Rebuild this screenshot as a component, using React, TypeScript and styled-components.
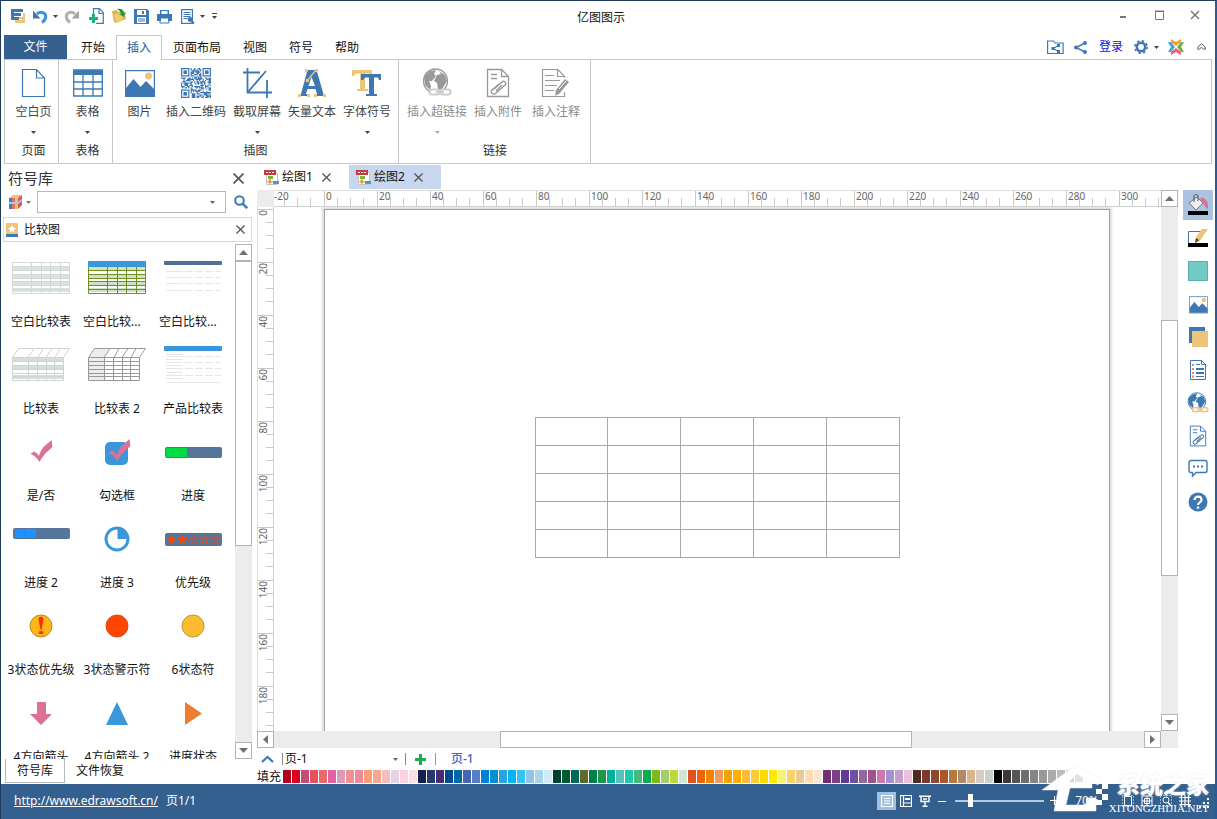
import React from "react";
import styled, { createGlobalStyle, css } from "styled-components";

const blue = "#3d78b4";
const sand = "#ecc47a";
const line = "#c8c8c8";

const Global = createGlobalStyle`
  * { box-sizing: border-box; }
  body { margin: 0; }
  body, button, input, select {
    font-family: "Noto Sans", "Noto Sans CJK SC", sans-serif;
    font-size: 12px;
    line-height: 18px;
    color: #111;
  }
  button { padding: 0; margin: 0; border: 0; background: none; white-space: nowrap; }
  svg { display: block; flex: none; }
`;

/* ---------- window frame ---------- */

const Window = styled.div`
  height: 100vh;
  display: flex;
  flex-direction: column;
  background: #fff;
  border: 1px solid #1f3c5c;
  border-right: 2px solid #2b5a94;
  border-bottom: 0;
  overflow: hidden;
`;

const TitleBar = styled.header`
  height: 34px;
  flex: none;
  display: grid;
  grid-template-columns: 1fr auto 1fr;
  align-items: center;
  padding: 0 14px 0 0;
`;

const QuickBar = styled.div`
  display: flex;
  align-items: center;
  height: 30px;
  padding-left: 7px;
  align-self: start;
`;

const QuickButton = styled.button<{ $w?: number }>`
  width: ${(p) => p.$w || 23}px;
  height: 22px;
  display: flex;
  align-items: center;
  justify-content: center;
`;

const Title = styled.h1`
  margin: 0;
  font-size: 12px;
  font-weight: 400;
`;

const WindowButtons = styled.div`
  display: flex;
  justify-content: flex-end;
  align-self: start;
  align-items: center;
  height: 28px;
  gap: 24px;
`;

const MenuBar = styled.nav`
  display: flex;
  height: 24px;
  flex: none;
  padding: 0 2px 0 3px;
`;

const FileButton = styled.button`
  width: 63px;
  margin-right: 3px;
  color: #fff;
  background: #34608f;
`;

const MenuTab = styled.button<{ $active?: boolean }>`
  padding: 0 10px;
  border: 1px solid transparent;
  border-bottom: 0;
  ${(p) =>
    p.$active &&
    css`
      position: relative;
      margin-bottom: -1px;
      background: #fff;
      border-color: ${line};
      color: #2b5a94;
    `}
`;

const MenuRight = styled.div`
  margin-left: auto;
  display: flex;
  align-items: center;
`;

const Login = styled.a`
  color: #1010e8;
  text-decoration: none;
  margin: 0 9px 0 6px;
`;

/* ---------- ribbon ---------- */

const Ribbon = styled.div`
  display: flex;
  flex: none;
  height: 105px;
  margin: 0 3px;
  border: 1px solid ${line};
`;

const Group = styled.section<{ $pad: string }>`
  display: flex;
  flex-direction: column;
  justify-content: space-between;
  border-right: 1px solid ${line};
  padding: ${(p) => p.$pad};
`;

const GroupItems = styled.div`
  display: flex;
  gap: 1px;
`;

const GroupName = styled.div`
  text-align: center;
  color: #333;
`;

const Tool = styled.button<{ $w?: number }>`
  min-width: ${(p) => p.$w || 45}px;
  padding: 0 3px;
  height: 72px;
  display: flex;
  flex-direction: column;
  align-items: center;
  color: #444;
  &:disabled { color: #8c8c8c; }
  span { margin: 5px 0 10px; }
`;

/* ---------- main area ---------- */

const Main = styled.main`
  flex: 1;
  min-height: 0;
  display: flex;
  padding-top: 1px;
`;

const Panel = styled.aside`
  width: 251px;
  flex: none;
  display: flex;
  flex-direction: column;
  padding-left: 2px;
`;

const PanelHead = styled.div`
  height: 26px;
  display: flex;
  align-items: center;
  justify-content: space-between;
  padding: 0 8px 0 5px;
  h2 { margin: 0; font-size: 15px; font-weight: 400; color: #333; }
`;

const SearchRow = styled.div`
  height: 22px;
  display: flex;
  align-items: center;
  padding-left: 5px;
  gap: 3px;
`;

const SearchBox = styled.div`
  flex: 1;
  min-width: 0;
  margin-left: 3px;
  height: 22px;
  display: flex;
  align-items: center;
  border: 1px solid #b8b8b8;
  input { flex: 1; min-width: 0; height: 18px; border: 0; outline: 0; background: transparent; }
  button { width: 15px; }
`;

const SectionHead = styled.div`
  height: 25px;
  margin-top: 4px;
  display: flex;
  align-items: center;
  border: 1px solid #d8d8d8;
  padding: 0 6px 0 2px;
  gap: 6px;
  span { flex: 1; }
`;

const PanelBody = styled.div`
  flex: 1;
  min-height: 0;
  margin-top: 2px;
  display: flex;
  justify-content: space-between;
`;

const Symbols = styled.div`
  width: 228px;
  display: grid;
  grid-template-columns: repeat(3, 76px);
  grid-auto-rows: 87px;
  overflow: hidden;
`;

const Symbol = styled.button`
  display: flex;
  flex-direction: column;
  align-items: center;
  justify-content: flex-end;
  line-height: 19px;
  > div { height: 68px; display: flex; align-items: center; }
`;

const SymbolName = styled.span<{ $cut: boolean }>`
  ${(p) =>
    p.$cut &&
    css`
      align-self: flex-start;
      padding-left: 4px;
    `}
`;

const PanelTabs = styled.div`
  height: 25px;
  display: flex;
  padding-left: 2px;
`;

const PanelTab = styled.button<{ $active?: boolean }>`
  height: 24px;
  padding: 0 11px;
  border: ${(p) => (p.$active ? "1px solid #b8b8b8" : "0")};
  border-top: 0;
`;

const ScrollBar = styled.div<{ $row?: boolean }>`
  display: flex;
  flex-direction: ${(p) => (p.$row ? "row" : "column")};
  ${(p) => (p.$row ? "height" : "width")}: 17px;
  background: #ececec;
`;

const PageScroll = styled(ScrollBar)`
  grid-area: ${(p) => (p.$row ? "3 / 1 / 4 / 3" : "1 / 3 / 3 / 4")};
`;

const ScrollButton = styled.button`
  width: 17px;
  height: 17px;
  flex: none;
  display: flex;
  align-items: center;
  justify-content: center;
  border: 1px solid #b4b4b4;
  background: #fff;
`;

const Space = styled.div<{ $grow: number }>`
  flex: ${(p) => p.$grow} 1 0;
`;

const Thumb = styled(Space)`
  border: 1px solid #b4b4b4;
  background: #fff;
`;

const Center = styled.div`
  flex: 1;
  min-width: 0;
  margin-left: 5px;
  display: flex;
  flex-direction: column;
`;

const DocTabs = styled.div`
  height: 25px;
  display: flex;
`;

const DocTab = styled.div<{ $active?: boolean }>`
  width: 92px;
  height: 24px;
  display: flex;
  align-items: center;
  gap: 3px;
  padding-left: 7px;
  background: ${(p) => (p.$active ? "#c7d7f0" : "#fff")};
  button:last-child { margin-left: 6px; }
`;

const Workspace = styled.div`
  flex: 1;
  min-height: 0;
  display: grid;
  grid-template-columns: 17px minmax(0, 1fr) 17px;
  grid-template-rows: 17px minmax(0, 1fr) 17px;
`;

const Corner = styled.div`
  background: #ececec;
`;

const RulerTop = styled.div`
  display: flex;
  overflow: hidden;
  border-top: 1px solid #ddd;
  border-bottom: 1px solid #d0d0d0;
`;

const MarkTop = styled.div`
  width: 53px;
  flex: none;
  padding-left: 1px;
  border-left: 1px solid ${line};
  font-size: 10px;
  line-height: 10px;
  color: #666;
  background: repeating-linear-gradient(90deg, transparent 0 12px, ${line} 12px 13px) left bottom / 40px 8px no-repeat;
  &:first-child { margin-left: -3px; padding-left: 2px; }
`;

const RulerSide = styled.div`
  display: flex;
  flex-direction: column;
  overflow: hidden;
  padding-top: 2px;
  border-left: 1px solid #ddd;
  border-right: 1px solid #d0d0d0;
`;

const MarkSide = styled.div`
  height: 53px;
  flex: none;
  border-top: 1px solid ${line};
  background: repeating-linear-gradient(180deg, transparent 0 12px, ${line} 12px 13px) right top / 7px 40px no-repeat;
  span {
    display: block;
    writing-mode: vertical-rl;
    transform: rotate(180deg);
    width: 10px;
    font-size: 10px;
    line-height: 10px;
    color: #666;
  }
`;

const Canvas = styled.div`
  display: flex;
  overflow: hidden;
  background: #fff;
  padding: 2px 51px 0 50px;
`;

const Page = styled.div`
  flex: 1;
  border: 1px solid #a0a0a0;
  border-bottom: 0;
  box-shadow: 0 0 2px 2px #dedede;
  padding-top: 207px;
`;

const Grid = styled.table`
  width: 365px;
  height: 141px;
  margin: 0 auto;
  table-layout: fixed;
  border-collapse: collapse;
  td { border: 1px solid #a8a8a8; padding: 0; }
`;

const PageTabs = styled.div`
  height: 22px;
  display: flex;
  align-items: center;
  padding-left: 4px;
`;

const PagePicker = styled.div`
  width: 124px;
  height: 12px;
  margin: 0 8px;
  display: flex;
  align-items: center;
  border: solid #888;
  border-width: 0 1px;
  padding-right: 7px;
  select { flex: 1; appearance: none; border: 0; padding: 0 0 0 2px; background: none; outline: 0; }
`;

const PageTab = styled.button`
  margin-left: 8px;
  height: 12px;
  line-height: 12px;
  padding-left: 15px;
  border-left: 1px solid #999;
  color: #3b62c4;
  font-weight: 500;
`;

const Palette = styled.div`
  height: 14px;
  display: flex;
  gap: 1px;
  overflow: hidden;
  span { width: 25px; line-height: 14px; }
`;

const Swatch = styled.button<{ $c: string }>`
  width: 8px;
  height: 13px;
  flex: none;
  background: ${(p) => p.$c};
`;

const SideBar = styled.div`
  width: 37px;
  flex: none;
  display: flex;
  flex-direction: column;
  align-items: center;
  gap: 3px;
  padding: 25px 2px 0 5px;
`;

const SideButton = styled.button<{ $active?: boolean }>`
  width: 30px;
  height: 30px;
  display: flex;
  align-items: center;
  justify-content: center;
  background: ${(p) => (p.$active ? "#a9c3e0" : "transparent")};
`;

/* ---------- status bar ---------- */

const StatusBar = styled.footer`
  height: 35px;
  flex: none;
  display: flex;
  align-items: center;
  padding: 0 1px 2px 13px;
  background: #34608f;
  color: #fff;
  a { color: #fff; margin-right: 8px; }
`;

const StatusTools = styled.div`
  margin-left: auto;
  display: flex;
  align-items: center;
`;

const StatusButton = styled.button<{ $active?: boolean; $w?: number }>`
  width: ${(p) => p.$w || 19}px;
  height: 18px;
  display: flex;
  align-items: center;
  justify-content: center;
  color: #fff;
  background: ${(p) => (p.$active ? "#a5bfe0" : "transparent")};
`;

const ZoomValue = styled(StatusButton)`
  padding-right: 8px;
`;

const Zoom = styled.input`
  appearance: none;
  width: 89px;
  height: 14px;
  margin: 0 0 0 5px;
  background: transparent;
  &::-webkit-slider-runnable-track { height: 2px; background: #b4c8e0; }
  &::-webkit-slider-thumb { appearance: none; width: 5px; height: 13px; margin-top: -6px; background: #fff; }
`;

const Watermark = styled.div`
  position: absolute;
  right: 8px;
  bottom: 4px;
  width: 167px;
  height: 52px;
  display: flex;
  justify-content: space-between;
  align-items: flex-end;
  color: #fff;
  pointer-events: none;
`;

const WatermarkText = styled.div`
  flex: none;
  display: flex;
  flex-direction: column;
  align-items: flex-end;
  strong {
    font-family: "Noto Sans CJK SC", sans-serif;
    font-size: 23px;
    line-height: 27px;
    margin-bottom: 4px;
    font-weight: 900;
    text-shadow: 0 0 2px #dde3ea;
  }
  small { font-family: "Liberation Serif", serif; font-size: 11px; line-height: 14px; }
`;

/* ---------- icons ---------- */

type Art = { w: number; h?: number; vb?: string; children: React.ReactNode };
const Svg = ({ w, h = w, vb, children }: Art) => (
  <svg width={w} height={h} viewBox={vb || `0 0 ${w} ${h}`} fill="none" aria-hidden="true">
    {children}
  </svg>
);

const Caret = ({ c = "#444" }: { c?: string }) => (
  <Svg w={5} h={3}><path d="M0 0h5L2.500 3z" fill={c} /></Svg>
);
const Cross = ({ s = 9, c = "#555" }: { s?: number; c?: string }) => (
  <Svg w={s} vb="0 0 10 10"><path d="M.5.5l9 9M9.500.5l-9 9" stroke={c} strokeWidth="1.500" /></Svg>
);
const arrows: Record<string, string> = {
  up: "M4.500 2L9 7H0z",
  down: "M0 2h9L4.500 7z",
  left: "M7 0v9L2 4.500z",
  right: "M2 0v9l5-4.500z",
};
const Arrow = ({ d }: { d: string }) => (
  <Svg w={9}><path d={arrows[d]} fill="#707070" /></Svg>
);

const EdrawIcon = () => (
  <Svg w={16}>
    <path d="M7 9h6V5h2v10H5v-3h7v-1H7z" fill={sand} />
    <path d="M1 1h12v3H4v1h7v3H4v1h5v3H1z" fill={blue} />
  </Svg>
);
const UndoIcon = () => (
  <Svg w={16}>
    <path d="M5 6c4-3.500 9-1 8.700 3-.2 2-1.700 4-3.700 5.500" stroke="#3a94d6" strokeWidth="3" />
    <path d="M1 2.500v8h7.500z" fill={blue} />
  </Svg>
);
const RedoIcon = () => (
  <Svg w={16}>
    <path d="M11 6c-4-3.500-9-1-8.700 3 .2 2 1.700 4 3.700 5.500" stroke="#b0b0b0" strokeWidth="3" />
    <path d="M15 2.500v8H7.500z" fill="#a4a4a4" />
  </Svg>
);
const NewIcon = () => (
  <Svg w={16}>
    <path d="M5.500 7V.7h6l3.800 4v10.600H8M11 1v4.500h4" stroke={blue} strokeWidth="1.200" />
    <path d="M4 6h3v3h3v3H7v3H4v-3H1V9h3z" fill="#1fae85" />
  </Svg>
);
const OpenIcon = () => (
  <Svg w={16}>
    <path d="M1 3l5-1 1 2 6-1 2 8-10 4-2-1z" fill="#e0b04a" />
    <path d="M3 6l11-2-3 9-6 2z" fill="#f2cc6c" />
    <path d="M6 1c4-1 6 0 7 4l2-1-2 5-5-3 2-.5C9 3 8 2 6 1z" fill="#23963f" />
  </Svg>
);
const SaveIcon = () => (
  <Svg w={15}>
    <path d="M0 0h13l2 2v13H0z" fill={blue} />
    <path d="M3 1h9v5H3zM3 8h9v6H3z" fill="#fff" />
    <path d="M8 2h2v3H8zM4 9.500h7v1H4zM4 11.500h7v1H4z" fill={blue} />
  </Svg>
);
const PrintIcon = () => (
  <Svg w={15}>
    <path d="M0 5h15v7H0zM3 1h9v4H3z" fill={blue} />
    <path d="M4.500 2h6v3h-6zM4 9h7v5H4z" fill="#fff" />
    <path d="M3 9h9v5H3z" stroke={blue} />
  </Svg>
);
const PreviewIcon = () => (
  <Svg w={14} h={15}>
    <path d="M.6.600h10.800v13.800H.6z" stroke={blue} strokeWidth="1.200" />
    <path d="M2.500 3.500h7M2.500 5.500h7M2.500 7.500h7M2.500 9.500h4" stroke={blue} />
    <circle cx="9" cy="10.500" r="2.400" fill={blue} />
    <path d="M10.500 12l2.500 2.500" stroke={blue} strokeWidth="2" />
  </Svg>
);

const BlankIcon = ({ c = blue }: { c?: string }) => (
  <Svg w={30}>
    <path d="M3.500 1.500h14l8 8.500v18.500h-22zM17.500 1.500v8.500h8" stroke={c} strokeWidth="1.200" />
  </Svg>
);
const TableIcon = () => (
  <Svg w={30}>
    <path d="M.7 2h28.600v26H.7zM.7 14h28.600M.7 21h28.600M10 6v22M20 6v22" stroke={blue} strokeWidth="1.300" />
    <path d="M0 2h30v5H0z" fill={blue} />
  </Svg>
);
const PictureIcon = ({ w = 30 }: { w?: number }) => (
  <Svg w={w} vb="0 0 30 30">
    <path d="M.6 2.600h28.800v25.800H.6z" stroke={blue} strokeWidth="1.200" />
    <path d="M1 20l7.500-9 7 8 5.500-6 8 8v7H1z" fill={blue} />
    <circle cx="23.500" cy="8" r="3.500" fill={sand} />
  </Svg>
);
const QrIcon = () => {
  const n = 25;
  const cells: string[] = [];
  const corner = (x: number, y: number) => (x < 8 && y < 8) || (x > n - 9 && y < 8) || (x < 8 && y > n - 9);
  let seed = 11;
  for (let y = 0; y < n; y++)
    for (let x = 0; x < n; x++) {
      seed = (seed * 16807) % 2147483647;
      if (!corner(x, y) && seed / 2147483647 > 0.45) cells.push(`M${x} ${y}h1v1h-1z`);
    }
  const finder = (x: number, y: number) => (
    <g key={`${x}-${y}`}>
      <path d={`M${x + 0.5} ${y + 0.5}h6v6h-6z`} stroke={blue} />
      <path d={`M${x + 2} ${y + 2}h3v3h-3z`} fill={blue} />
    </g>
  );
  return (
    <Svg w={30} vb="0 0 25 25">
      <path d={cells.join("")} fill={blue} />
      {finder(0, 0)}{finder(18, 0)}{finder(0, 18)}
    </Svg>
  );
};
const CropIcon = () => (
  <Svg w={30}>
    <path d="M5.500 0v24.500H30M1 4.500h17M25 12v18M6 24L24 3" stroke={blue} strokeWidth="1.800" />
  </Svg>
);
const VectorIcon = () => (
  <Svg w={30}>
    <path d="M10.500 2h9l7 24h2v2H17v-2h3l-1.500-5h-8L9 26h2v2H2v-2h2zM14.500 9l-3 9H18z" fill={blue} />
    <path d="M9 14L19 2" stroke={sand} strokeWidth="1.400" />
    <path d="M8 1h3v3H8zM18 1h3v3h-3zM9 11h3v3H9zM1 26h3v3H1zM10 26h3v3h-3zM17 26h3v3h-3zM26 26h3v3h-3z" fill={sand} />
  </Svg>
);
const FontIcon = () => (
  <Svg w={30}>
    <path d="M0 2h20v6h-2l-1-2.500h-4V21h3v2H5v-2h3V5.500H4L2 8H0z" fill={sand} />
    <path d="M9 6h20v6h-2l-1-2.500h-4V26h3v2H14v-2h3V9.500h-4L11 12H9z" fill={blue} />
  </Svg>
);
const GlobeIcon = ({ w = 30, c = blue, l = sand }: { w?: number; c?: string; l?: string }) => (
  <Svg w={w} vb="0 0 30 30">
    <circle cx="13.500" cy="13" r="12" stroke={c} strokeWidth="1.300" />
    <path d="M3 7l5-4 6-1-2 4 2 2-4 5H7l2 5-1 4-5-5-1-7zM17 3l6 4 2 6-3 5-3 5-3-2-1-6-3-2 3-6 4-1z" fill={c} />
    <rect x="7.500" y="21.500" width="10" height="5" rx="2" fill="#fff" stroke={l} strokeWidth="2" />
    <rect x="18.500" y="21.500" width="10" height="5" rx="2" fill="#fff" stroke={l} strokeWidth="2" />
    <path d="M14 24h8" stroke={l} strokeWidth="2" />
  </Svg>
);
const ClipIcon = ({ w = 30, c = blue }: { w?: number; c?: string }) => (
  <Svg w={w} vb="0 0 30 30">
    <path d="M4.500 1.500h14l7 7v20h-21zM18.500 1.500v7h7M8 6.500h6M8 10.500h6" stroke={c} strokeWidth="1.300" />
    <path d="M11 21l8-7c2-2 5 1 3 3l-9 8c-3 3-6-1-4-3l7-6M13 23l6-6" stroke={c} strokeWidth="1.400" />
  </Svg>
);
const NoteIcon = () => (
  <Svg w={30}>
    <path d="M23.500 10V8.500L17 1.500H1.500v27h22V24M16.500 2v6.500h7M4 7.500h9M4 12.500h15M4 17.500h12M4 22.500h9" stroke="#999" strokeWidth="1.200" />
    <path d="M24 11l4 3-9 11-5 3 1-6z" fill="#999" />
    <path d="M18 21l7-8" stroke="#fff" />
  </Svg>
);

const DocIcon = () => (
  <Svg w={15}>
    <path d="M2.500 1.500h9l2 2v11h-11z" fill="#fff" stroke="#c4c4c4" />
    <path d="M0 0h12v5H0z" fill="#c43a3f" />
    <path d="M2 2h2v1H2zM5 2h2v1H5zM8 2h2v1H8z" fill="#fff" />
    <path d="M4 6h5v3H4z" fill="#7cb342" />
    <path d="M6 9v3h4" stroke="#d59a3b" />
    <path d="M3 12l3-3 2 3-2 2z" fill="#e9a53b" />
    <path d="M9 11h6v3H9z" fill="#4a9ad8" />
  </Svg>
);
const BooksIcon = () => (
  <Svg w={15} h={16}>
    <path d="M1 4l4-3h9l-4 3z" fill="#f0b8a0" />
    <path d="M1 4h3v11H1z" fill="#3f82c4" />
    <path d="M4 4h3v11H4z" fill="#e8715c" />
    <path d="M7 4h3v11H7z" fill="#efc252" />
    <path d="M10 4l4-3v10l-4 4z" fill="#d95763" />
    <path d="M1 8h9l4-3v2l-4 3H1z" fill="#9ad0ee" />
  </Svg>
);
const SectionIcon = () => (
  <Svg w={12} h={14}>
    <path d="M0 0h12v11H0z" fill={sand} />
    <path d="M0 11h12v3H0z" fill={blue} />
    <path d="M6 2l1.200 2.600 2.800.3-2 2 .6 2.700L6 8.300 3.400 9.600 4 6.900l-2-2 2.800-.3z" fill="#fff" />
  </Svg>
);
const SearchIcon = () => (
  <Svg w={14}>
    <circle cx="5.500" cy="5.500" r="4.300" stroke={blue} strokeWidth="2" />
    <path d="M8.800 8.800l4.400 4.400" stroke={blue} strokeWidth="2.400" />
  </Svg>
);

/* ---------- symbol thumbnails ---------- */

const FlatTable = ({ stroke, stripe, head }: { stroke: string; stripe: string; head?: string }) => (
  <Svg w={58} h={34}>
    {[6, 13, 20, 27].map((y) => <path key={y} d={`M1 ${y}h56v4H1z`} fill={stripe} />)}
    <path
      d="M.5 1.500h57v31H.5zM.5 5.500h57M.5 9.500h57M.5 13.500h57M.5 17.500h57M.5 20.500h57M.5 24.500h57M.5 28.500h57M19.500 1v31M29.500 1v31M38.500 1v31M48.500 1v31"
      stroke={stroke}
    />
    {head && <path d="M0 0h58v6H0z" fill={head} />}
  </Svg>
);
const SoftTable = ({ head, side }: { head: string; side?: boolean }) => (
  <Svg w={58} h={side ? 38 : 34}>
    <rect width="58" height={side ? 5 : 4} rx="1" fill={head} />
    <path d="M2 10.500h55M2 16.500h55M2 22.500h55M2 29.500h55" stroke="#e6e6e6" strokeDasharray="17 2 8 2 8 2 8 2 8 2" />
    {side && <path d="M2 8.500h16M2 13.500h16M2 19.500h16M2 26.500h16M2 32.500h16M2 36.500h55" stroke="#e6e6e6" />}
  </Svg>
);
const SlantTable = ({ stroke, stripe, first }: { stroke: string; stripe?: string; first?: string }) => (
  <Svg w={58} h={34}>
    {first && <path d="M1 10L7 1h14l-5 9v22H1z" fill={first} />}
    {stripe && [10, 17, 27].map((y) => <path key={y} d={`M1 ${y}h51v4H1z`} fill={stripe} />)}
    <path
      d="M.5 9.500L6.500.5h51l-6 9v23H.5zM16 9.500l6-9M26 9.500l5-9M34 9.500l6-9M43 9.500l5-9M.5 9.500h51M.5 13.500h51M.5 17.500h51M.5 21.500h51M.5 25.500h51M.5 28.500h51M16.500 10v22M25.500 10v22M34.500 10v22M42.500 10v22"
      stroke={stroke}
    />
  </Svg>
);
const tick = "M8.500 19.500l4-2 3.500 3 .8 1.500c1.500-4 3-7 5.200-9.500L29.700 6l.6 7.300L26 17c-4 3-6 7-8.500 11-2-3.500-5-6.500-9-8.500z";
const star = "M4.500 0l1.200 3.200H9L6.300 5.200l1 3.300-2.800-2-2.800 2 1-3.300L0 3.200h3.300z";

const symbols: [string, React.ReactNode][] = [
  ["空白比较表", <FlatTable stroke="#d3dad6" stripe="#d9e2dd" />],
  ["空白比较...", <FlatTable stroke="#6f8f20" stripe="#cfe3c0" head="#3a98da" />],
  ["空白比较...", <SoftTable head="#4f6f94" />],
  ["比较表", <SlantTable stroke="#cdd5d0" stripe="#d3e0d8" />],
  ["比较表 2", <SlantTable stroke="#999" first="#ececec" />],
  ["产品比较表", <SoftTable head="#3a98da" side />],
  ["是/否", <Svg w={38} h={36}><path d={tick} fill="#dc7096" /></Svg>],
  ["勾选框", (
    <Svg w={38} h={36}>
      <rect x="7" y="8" width="23" height="23" rx="5" fill="#3a98da" />
      <path d={tick} fill="#dc7096" transform="translate(2 -1)" />
    </Svg>
  )],
  ["进度", <Svg w={57} h={11}><rect width="57" height="11" rx="2" fill="#56759a" /><path d="M1 1h21v9H1z" fill="#00dc46" /></Svg>],
  ["进度 2", (
    <Svg w={57} h={23}>
      <rect width="57" height="11" rx="2" fill="#56759a" />
      <path d="M2 1h10v9H2zM13 1h10v9H13z" fill="#1e90ff" />
    </Svg>
  )],
  ["进度 3", (
    <Svg w={26}>
      <circle cx="13" cy="13" r="11" stroke="#3a98da" strokeWidth="3" />
      <path d="M13.500 13V2a11 11 0 0 1 10 11z" fill="#3a98da" />
    </Svg>
  )],
  ["优先级", (
    <Svg w={57} h={13}>
      <rect width="57" height="13" rx="2" fill="#56759a" />
      {[0, 1, 2, 3, 4].map((i) => (
        <path key={i} d={star} transform={`translate(${2 + i * 11} 2)`} fill={i < 2 ? "#ff4500" : "none"} stroke="#ff4500" strokeWidth=".8" />
      ))}
    </Svg>
  )],
  ["3状态优先级", (
    <Svg w={24}>
      <circle cx="12" cy="12" r="11" fill="#ffb515" stroke="#b98a20" />
      <path d="M9.500 5c0-3 5-3 5 0L12.500 16h-1z" fill="#ff2a00" />
      <ellipse cx="12" cy="18.500" rx="2.500" ry="1.500" fill="#ff2a00" />
    </Svg>
  )],
  ["3状态警示符", <Svg w={24}><circle cx="12" cy="12" r="11" fill="#ff4500" stroke="#e04a10" /></Svg>],
  ["6状态符", <Svg w={24}><circle cx="12" cy="12" r="11" fill="#fdbb30" stroke="#b9963f" /></Svg>],
  ["4方向箭头", <Svg w={24}><path d="M8 1h9v12h6L12 24 1 13h7z" fill="#dc7096" /></Svg>],
  ["4方向箭头 2", <Svg w={24}><path d="M12 1l11 23H1z" fill="#3a98da" /></Svg>],
  ["进度状态", <Svg w={24}><path d="M4 1l17 11.500L4 24z" fill="#ed7d31" /></Svg>],
];

/* ---------- data ---------- */

const swatches = (
  "b3001b d9001b bf4f7a e8505b ec6a66 e560a0 dd9ab8 f09090 ef8a9c ff9c74 f2a98f f5bcbc e6d2e6 ffd0e0 f9dfe4 " +
  "14204f 233a6e 452b78 004a8f 0068a8 4666b0 557fc4 0080d6 0090cf 28a5dd 00b4f5 33c4f5 90c4ea a5d6ec cfe9f5 " +
  "00402f 005a30 00685f 5b6b28 007f48 1f9748 00b09c 56c2bc 1dcbaa 45b97c 0aaa50 7fb918 a3cf6a bcd841 cfe6d2 " +
  "e0521f eb6500 f48200 f09a5c f0a500 ffae0a ffba38 fbcb38 ffd900 ffe800 f9f07a fbd06a e8c998 ffdcae fbe6d6 " +
  "722f6f 7f3f86 5f3a94 6e519e 94679e a0528c d078ac a58fd2 c3a0cc ecc0dc " +
  "52291c 7d3a2c 8b4a2c ad562c b8793f b88668 dcb48a d6ccc4 c8d2cc " +
  "000000 3a3838 555555 6e6e6e 858585 999999 ababab bcbcbc d0d0d0 e2e2e2"
).split(" ");

type ToolData = { name: string; icon: React.ReactNode; menu?: boolean; off?: boolean; w?: number };
const groups: { name: string; pad: string; tools: ToolData[] }[] = [
  { name: "页面", pad: "8px 2px 3px 6px", tools: [{ name: "空白页", icon: <BlankIcon />, menu: true }] },
  { name: "表格", pad: "8px 2px 3px 6px", tools: [{ name: "表格", icon: <TableIcon />, menu: true }] },
  {
    name: "插图",
    pad: "8px 4px 3px 4px",
    tools: [
      { name: "图片", icon: <PictureIcon /> },
      { name: "插入二维码", icon: <QrIcon /> },
      { name: "截取屏幕", icon: <CropIcon />, menu: true },
      { name: "矢量文本", icon: <VectorIcon /> },
      { name: "字体符号", icon: <FontIcon />, menu: true },
    ],
  },
  {
    name: "链接",
    pad: "8px 4px 3px 5px",
    tools: [
      { name: "插入超链接", icon: <GlobeIcon c="#999" l="#ccc" />, menu: true, off: true },
      { name: "插入附件", icon: <ClipIcon c="#999" />, off: true },
      { name: "插入注释", icon: <NoteIcon />, off: true, w: 60 },
    ],
  },
];

const sideTools: [string, React.ReactNode][] = [
  ["填充", (
    <Svg w={22}>
      <path d="M2 9l8-6 6 6-7 7z" fill="#eee" stroke="#777" />
      <path d="M7 8V2c0-2 4-2 4 0v5" stroke="#555" />
      <path d="M13 4c5-1 9 3 8 11-3-1-4-6-6-7z" fill="#dc7096" />
      <path d="M1 17h20v4H1z" fill="#000" />
    </Svg>
  )],
  ["线条", (
    <Svg w={22}>
      <path d="M1.500 16V4.500H14" stroke={blue} />
      <path d="M15 2h6l-8 12-5 2 1-6z" fill={sand} />
      <path d="M9 11l3 2-4 3z" fill="#444" />
      <path d="M1 16h20v4H1z" fill="#000" />
    </Svg>
  )],
  ["主题", <Svg w={22}><path d="M1.500 1.500h19v19h-19z" fill="#72cbc6" stroke="#5aaeaa" /></Svg>],
  ["图片", <PictureIcon w={19} />],
  ["图层", <Svg w={22}><path d="M2 1h16v16H2z" fill={blue} /><path d="M5 5h16v16H5z" fill={sand} /></Svg>],
  ["大纲", (
    <Svg w={20}>
      <path d="M2.500.500h11l4 4v15h-15zM13.500.500v4h4" stroke={blue} />
      <path d="M8 4h4v1H8zM8 8h8v2H8zM8 12h8v2H8zM8 16h8v1H8z" fill={blue} />
      <path d="M4 4h2v2H4zM4 8h2v2H4zM4 12h2v2H4zM4 15.500h2v2H4z" fill="#d98a7a" />
    </Svg>
  )],
  ["超链接", <GlobeIcon w={22} />],
  ["附件", <ClipIcon w={22} />],
  ["注释", (
    <Svg w={20}>
      <path d="M3 1.500h14q2 0 2 2v8q0 2-2 2H8L4.500 17v-3.500H3q-2 0-2-2v-8q0-2 2-2z" stroke={blue} strokeWidth="1.400" />
      <path d="M5 6.500h2v2H5zM9 6.500h2v2H9zM13 6.500h2v2h-2z" fill={blue} />
    </Svg>
  )],
  ["帮助", (
    <Svg w={20}>
      <circle cx="10" cy="10" r="9.500" fill={blue} />
      <path d="M6.500 8c0-4.500 7-4.500 7 0 0 2.500-3.500 2.200-3.500 5" stroke="#fff" strokeWidth="2.200" />
      <path d="M8.800 14.500h2.400v2.200H8.800z" fill="#fff" />
    </Svg>
  )],
];

const range = (n: number) => Array.from({ length: n }, (_, i) => i);

export default function App() {
  return (
    <Window>
      <Global />
      <TitleBar>
        <QuickBar>
          <QuickButton $w={19} aria-label="亿图"><EdrawIcon /></QuickButton>
          <QuickButton $w={25} aria-label="撤销"><UndoIcon /></QuickButton>
          <QuickButton $w={7} aria-label="撤销列表"><Caret /></QuickButton>
          <QuickButton $w={25} aria-label="重做"><RedoIcon /></QuickButton>
          <QuickButton aria-label="新建"><NewIcon /></QuickButton>
          <QuickButton aria-label="打开"><OpenIcon /></QuickButton>
          <QuickButton aria-label="保存"><SaveIcon /></QuickButton>
          <QuickButton aria-label="打印"><PrintIcon /></QuickButton>
          <QuickButton aria-label="预览"><PreviewIcon /></QuickButton>
          <QuickButton $w={7} aria-label="预览列表"><Caret /></QuickButton>
          <QuickButton $w={17} aria-label="自定义">
            <Svg w={5} h={6}><path d="M0 0h5v1H0zM0 3h5L2.500 6z" fill="#444" /></Svg>
          </QuickButton>
        </QuickBar>
        <Title>亿图图示</Title>
        <WindowButtons>
          <button aria-label="最小化"><Svg w={12}><path d="M3 7h6v2H3z" fill="#777" /></Svg></button>
          <button aria-label="最大化"><Svg w={12}><path d="M2.500 2.500h8v8h-8z" stroke="#777" /><path d="M2 1.500h9v1.500H2z" fill="#777" /></Svg></button>
          <button aria-label="关闭"><Svg w={12}><path d="M2 2l8 8M10 2l-8 8" stroke="#777" strokeWidth="1.500" /></Svg></button>
        </WindowButtons>
      </TitleBar>

      <MenuBar>
        <FileButton>文件</FileButton>
        {["开始", "插入", "页面布局", "视图", "符号", "帮助"].map((t) => (
          <MenuTab key={t} $active={t === "插入"}>{t}</MenuTab>
        ))}
        <MenuRight>
          <QuickButton $w={25} aria-label="共享文件夹">
            <Svg w={17} h={15}>
              <path d="M.6 13.500V1h6l1.500 2h8v10.500z" stroke={blue} strokeWidth="1.200" />
              <path d="M11.500 5.500L6 8.500l5.500 3" stroke={blue} strokeWidth="1.200" />
              <path d="M10 4h3v3h-3zM4.500 7h3v3h-3zM10 10h3v3h-3z" fill={blue} />
            </Svg>
          </QuickButton>
          <QuickButton $w={25} aria-label="分享">
            <Svg w={13}>
              <path d="M11 2L2 6.500l9 4.500" stroke={blue} strokeWidth="1.400" />
              <circle cx="11" cy="2" r="2" fill={blue} /><circle cx="2" cy="6.500" r="2" fill={blue} /><circle cx="11" cy="11" r="2" fill={blue} />
            </Svg>
          </QuickButton>
          <Login href="#login">登录</Login>
          <QuickButton $w={18} aria-label="设置">
            <Svg w={14}>
              <circle cx="7" cy="7" r="4.200" stroke={blue} strokeWidth="2.600" />
              <circle cx="7" cy="7" r="6.200" stroke={blue} strokeWidth="1.600" strokeDasharray="2.400 2.470" />
            </Svg>
          </QuickButton>
          <QuickButton $w={12} aria-label="设置列表"><Caret /></QuickButton>
          <QuickButton $w={28} aria-label="亿图家族">
            <Svg w={16}>
              <path d="M3 0l5 3 5-3v3L8 7 3 3z" fill="#f0a22e" />
              <path d="M16 3l-3 5 3 5h-3L9 8l4-5z" fill="#6fae46" />
              <path d="M3 16l5-3 5 3v-3L8 9l-5 4z" fill="#e8607c" />
              <path d="M0 3l3 5-3 5h3l4-5-4-5z" fill="#3fa4dc" />
            </Svg>
          </QuickButton>
          <QuickButton aria-label="折叠功能区">
            <Svg w={9} h={8}><path d="M.8 4L4.500.8 8.200 4v2.200H6.500l-2-2-2 2H.8z" stroke="#555" /></Svg>
          </QuickButton>
        </MenuRight>
      </MenuBar>

      <Ribbon>
        {groups.map((g) => (
          <Group key={g.name} $pad={g.pad}>
            <GroupItems>
              {g.tools.map((t) => (
                <Tool key={t.name} disabled={t.off} $w={t.w}>
                  {t.icon}
                  <span>{t.name}</span>
                  {t.menu && <Caret c={t.off ? "#aaa" : "#444"} />}
                </Tool>
              ))}
            </GroupItems>
            <GroupName>{g.name}</GroupName>
          </Group>
        ))}
      </Ribbon>

      <Main>
        <Panel>
          <PanelHead><h2>符号库</h2><button aria-label="关闭符号库"><Cross s={11} /></button></PanelHead>
          <SearchRow>
            <button aria-label="符号库列表"><BooksIcon /></button>
            <Caret c="#777" />
            <SearchBox>
              <input aria-label="搜索符号" />
              <button aria-label="搜索记录"><Caret c="#666" /></button>
            </SearchBox>
            <QuickButton aria-label="搜索"><SearchIcon /></QuickButton>
          </SearchRow>
          <SectionHead>
            <SectionIcon />
            <span>比较图</span>
            <button aria-label="关闭比较图"><Cross /></button>
          </SectionHead>
          <PanelBody>
            <Symbols>
              {symbols.map(([name, art], i) => (
                <Symbol key={i}>
                  <div>{art}</div>
                  <SymbolName $cut={name.endsWith("...")}>{name}</SymbolName>
                </Symbol>
              ))}
            </Symbols>
            <ScrollBar>
              <ScrollButton aria-label="向上"><Arrow d="up" /></ScrollButton>
              <Thumb $grow={284} />
              <Space $grow={197} />
              <ScrollButton aria-label="向下"><Arrow d="down" /></ScrollButton>
            </ScrollBar>
          </PanelBody>
          <PanelTabs>
            <PanelTab $active>符号库</PanelTab>
            <PanelTab>文件恢复</PanelTab>
          </PanelTabs>
        </Panel>

        <Center>
          <DocTabs>
            {["绘图1", "绘图2"].map((t, i) => (
              <DocTab key={t} $active={i === 1}>
                <DocIcon />
                <button>{t}</button>
                <button aria-label={`关闭${t}`}><Cross /></button>
              </DocTab>
            ))}
          </DocTabs>
          <Workspace>
            <Corner />
            <RulerTop>{range(17).map((i) => <MarkTop key={i}>{i * 20 - 20}</MarkTop>)}</RulerTop>
            <PageScroll>
              <ScrollButton aria-label="向上滚动"><Arrow d="up" /></ScrollButton>
              <Space $grow={113} />
              <Thumb $grow={255} />
              <Space $grow={139} />
              <ScrollButton aria-label="向下滚动"><Arrow d="down" /></ScrollButton>
            </PageScroll>
            <RulerSide>{range(10).map((i) => <MarkSide key={i}><span>{i * 20}</span></MarkSide>)}</RulerSide>
            <Canvas>
              <Page>
                <Grid aria-label="比较表">
                  <tbody>
                    {range(5).map((r) => <tr key={r}>{range(5).map((c) => <td key={c} />)}</tr>)}
                  </tbody>
                </Grid>
              </Page>
            </Canvas>
            <PageScroll $row>
              <ScrollButton aria-label="向左滚动"><Arrow d="left" /></ScrollButton>
              <Space $grow={227} />
              <Thumb $grow={411} />
              <Space $grow={233} />
              <ScrollButton aria-label="向右滚动"><Arrow d="right" /></ScrollButton>
            </PageScroll>
            <Corner />
          </Workspace>
          <PageTabs>
            <button aria-label="展开页面"><Svg w={13} h={8}><path d="M1 7l5.500-5L12 7" stroke={blue} strokeWidth="2.200" /></Svg></button>
            <PagePicker>
              <select aria-label="页面"><option>页-1</option></select>
              <Caret c="#666" />
            </PagePicker>
            <button aria-label="添加页面"><Svg w={13}><path d="M5 1h3v4h4v3H8v4H5V8H1V5h4z" fill="#1fa84f" /></Svg></button>
            <PageTab>页-1</PageTab>
          </PageTabs>
          <Palette>
            <span>填充</span>
            {swatches.map((c) => <Swatch key={c} $c={`#${c}`} aria-label={`#${c}`} />)}
          </Palette>
        </Center>

        <SideBar>
          {sideTools.map(([name, icon], i) => (
            <SideButton key={name} $active={i === 0} aria-label={name}>{icon}</SideButton>
          ))}
        </SideBar>
      </Main>

      <StatusBar>
        <a href="http://www.edrawsoft.cn/">http://www.edrawsoft.cn/</a>
        <span>页1/1</span>
        <StatusTools>
          <StatusButton $active aria-label="普通视图">
            <Svg w={12}><path d="M.5.5h11v11H.5zM3 3.500h6M3 6h6M3 8.500h6" stroke="#fff" strokeWidth="1.200" /></Svg>
          </StatusButton>
          <StatusButton aria-label="页面视图">
            <Svg w={12}><path d="M.5.5h11v11H.5zM3.500 1v10M5.500 4.500h4v-1h-4zM4 8h7" stroke="#fff" strokeWidth="1.200" /></Svg>
          </StatusButton>
          <StatusButton aria-label="演示视图">
            <Svg w={12}><path d="M0 1.200h12M2 1v5.500h8V1M4 4h4M6 7v4M3.500 11.300h5" stroke="#fff" strokeWidth="1.400" /></Svg>
          </StatusButton>
          <StatusButton $w={16} aria-label="缩小"><Svg w={8}><path d="M0 4h8v1H0z" fill="#fff" /></Svg></StatusButton>
          <Zoom type="range" min={0} max={100} defaultValue={15} aria-label="缩放" />
          <StatusButton $w={20} aria-label="放大"><Svg w={9}><path d="M4 0h1v9H4zM0 4h9v1H0z" fill="#fff" /></Svg></StatusButton>
          <ZoomValue $w={54}>70%</ZoomValue>
          <StatusButton aria-label="适合页面"><Svg w={12}><path d="M2.500 1.500h7v9h-7z" stroke="#fff" /><path d="M.5.5h11v11H.5z" stroke="#fff" strokeDasharray="1 2" /></Svg></StatusButton>
          <StatusButton aria-label="适合宽度"><Svg w={12}><path d="M1 1h10v10H1zM1 6h10M6 1v10M3.500 3.500h5v5h-5z" stroke="#fff" /></Svg></StatusButton>
          <StatusButton aria-label="区域缩放"><Svg w={12}><path d="M.5.5h11v11H.5z" stroke="#fff" strokeDasharray="1 2" /><circle cx="6" cy="5" r="3" stroke="#fff" /><path d="M8 7.500l3 3.500" stroke="#fff" strokeWidth="1.500" /></Svg></StatusButton>
          <StatusButton aria-label="网格"><Svg w={12}><path d="M2.500 0v12M6 0v12M9.500 0v12M0 2.500h12M0 6h12M0 9.500h12" stroke="#fff" strokeWidth="1.200" /></Svg></StatusButton>
          <StatusButton $w={20} aria-label="调整大小">
            <Svg w={12} h={18}><path d="M9 6h2v2H9zM9 10h2v2H9zM5 10h2v2H5zM9 14h2v2H9zM5 14h2v2H5zM1 14h2v2H1z" fill="#fff" /></Svg>
          </StatusButton>
        </StatusTools>
      </StatusBar>

      <Watermark>
        <Svg w={66} h={52}>
          <path
            fillRule="evenodd"
            d="M0 27L34 2l25 14-3 6-6-3v6H28l-4 17h20v-7h10v13H12l4-21zM27 19h20L35 11z"
            fill="#fff"
            stroke="#e8edf2"
            strokeWidth=".5"
          />
          <path d="M54 26h6v5h-6zM60 21h6v5h-6zM60 31h6v6h-6zM54 37h6v5h-6z" fill="#fff" />
        </Svg>
        <WatermarkText>
          <strong>系统之家</strong>
          <small>XITONGZHIJIA.NET</small>
        </WatermarkText>
      </Watermark>
    </Window>
  );
}
